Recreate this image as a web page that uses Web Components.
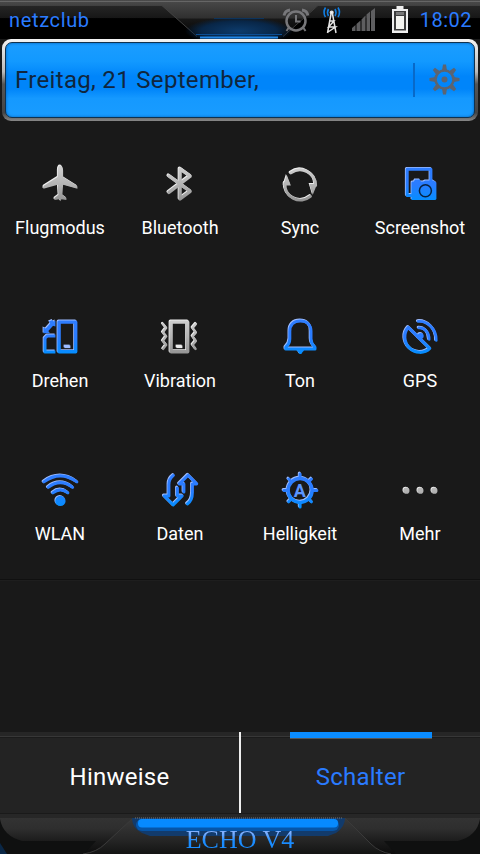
<!DOCTYPE html>
<html lang="de">
<head>
<meta charset="utf-8">
<title>Schalter</title>
<style>
  body {
    margin: 0;
    background: #191919;
    font-family: Roboto, "Noto Sans", sans-serif;
    color: #fff;
  }
</style>
</head>
<body>
<phone-shade>
  <status-bar slot="status" carrier="netzclub" time="18:02"></status-bar>
  <date-panel slot="date">Freitag, 21 September,</date-panel>
  <toggle-tile icon="plane">Flugmodus</toggle-tile>
  <toggle-tile icon="bluetooth">Bluetooth</toggle-tile>
  <toggle-tile icon="sync">Sync</toggle-tile>
  <toggle-tile icon="screenshot" on>Screenshot</toggle-tile>
  <toggle-tile icon="rotate" on>Drehen</toggle-tile>
  <toggle-tile icon="vibrate">Vibration</toggle-tile>
  <toggle-tile icon="bell" on>Ton</toggle-tile>
  <toggle-tile icon="gps" on>GPS</toggle-tile>
  <toggle-tile icon="wifi" on>WLAN</toggle-tile>
  <toggle-tile icon="data" on>Daten</toggle-tile>
  <toggle-tile icon="brightness" on>Helligkeit</toggle-tile>
  <toggle-tile icon="more">Mehr</toggle-tile>
  <shade-tab slot="tabs">Hinweise</shade-tab>
  <shade-tab slot="tabs" active>Schalter</shade-tab>
  <shade-footer slot="footer">ECHO V4</shade-footer>
</phone-shade>

<script>
// All icons use a 48x48 box. Shapes are stroked unless they carry class "f".
const icons = {
  plane: `
    <path class="f" d="M24 5c1.700 0 2.700 2 2.700 5v6.500l13.500 8.500c1 .7.900 1.300.8 3.300l-14.300-4-.7 10 4 3.200v2l-5-.6-1 2-1-2-5 .6v-2l4-3.200-.7-10-14.300 4c-.1-2-.2-2.600.8-3.300l13.500-8.500v-6.500c0-3 1-5 2.700-5z"/>`,
  bluetooth: `<path d="M12.500 15.500 33.800 31 23.700 38.500V8.500L33.800 15.800 12.500 32" stroke-width="3.300"/>`,
  sync: `
    <path d="M14.500 12.500A15.500 15.500 0 0 1 39.200 25M34 36A15.500 15.500 0 0 1 8.600 23"/>
    <path class="f" d="M10.300 14.300 14.500 25H7zM36.300 34.500 33 23.500h7.700z"/>`,
  screenshot: `
    <path d="M34.500 20V8.800H10.800V35H15"/>
    <path class="f" d="M15 22l1-1h1.500l1-2h5l1 2H27l2-1h8l3 2v16.500l-1 1H15z"/>
    <circle cx="29" cy="30.300" r="6" class="lens"/>`,
  rotate: `
    <path d="M22.700 8.700h16.600v29.600H22.700z" stroke-width="3.400"/>
    <path d="M19 22.500h-8l-2.400 2.400v13.600H19" stroke-linecap="butt"/>
    <path class="f" d="M7 14l2.300 1 4.500-5-1.300-2L16 6.500l1 1.500 2-1v6l-2.300-.7-5 5.500 2 2H7z"/>
    <path class="f w" d="M28 32h6v2.700h-6z"/>`,
  vibrate: `
    <path d="M14.700 8.700h16.600v29.600H14.700z" stroke-width="3.400"/>
    <path d="M6.500 10.500l3.300 4-3.300 4.500 3.300 4-3.300 4.500 3.300 4-3 4M39.500 10.500l-3.300 4 3.300 4.500-3.300 4 3.300 4.500-3.300 4 3 4" stroke-width="2.400"/>
    <path class="f w" d="M20 32h6v2.700h-6z"/>`,
  bell: `
    <path d="M24 7.500c-6.600 0-10.600 4-10.600 10.500v7.500c0 4-1.500 6-4 8.500v1.500h29.200V34c-2.500-2.500-4-4.500-4-8.500V18c0-6.500-4-10.500-10.600-10.500z"/>
    <path class="f" d="M20.500 36.500h7c0 1.500-1.500 1.700-2 3.300q-1.500 1.800-3 0c-.5-1.600-2-1.800-2-3.300z"/>`,
  gps: `
    <path d="M12 14C6.500 20 7.500 29 13 34.500c5.500 5.500 15 6 20.300.5z" stroke-width="3.200"/>
    <path d="M22.500 14.500C28 14 33 19 32.700 26M21.700 8C31 7 40.500 16 39.800 27" stroke-width="2.800"/>
    <circle class="f" cx="24.300" cy="22.500" r="3"/>
    <path d="M24 22l-2 2"/>`,
  wifi: `
    <path d="M7.500 15.500Q24 3.500 40.500 15.500M11.800 21Q24 11.500 36.200 21M16.500 26.500Q24 20.500 31.500 26.500"/>
    <circle class="f" cx="24" cy="34.500" r="5.200"/>`,
  data: `
    <path d="M17 9Q12.500 12.500 12.500 18v11.500H7.800l9 9 9-9H21v-8"/>
    <path d="M27.500 25.500v-8H23l8.700-8.700 8.600 8.700H36V26q0 8-5 11.500"/>`,
  brightness: `
    <circle cx="23.700" cy="24" r="12" stroke-width="3.500"/>
    <path d="M23.700 7.500v4M23.700 36.500v4M7.500 24h4M36.500 24h4M12.300 12.600l2.500 2.500M32.600 32.900l2.500 2.500M35.100 12.600l-2.500 2.500M14.800 32.900l-2.500 2.500"/>`,
  more: `
    <circle class="f" cx="10" cy="24.300" r="3.100"/>
    <circle class="f" cx="24" cy="24.300" r="3.100"/>
    <circle class="f" cx="38" cy="24.300" r="3.100"/>`,
};

class PhoneShade extends HTMLElement {
  constructor() {
    super();
    this.attachShadow({ mode: 'open' }).innerHTML = `
      <style>
        :host {
          display: flex;
          flex-direction: column;
          width: 480px;
          height: 854px;
          overflow: hidden;
          background: #191919;
        }
        .grid {
          display: grid;
          grid-template-columns: repeat(4, 120px);
          grid-auto-rows: 153px;
          border-bottom: 1px solid #101010;
          box-shadow: 0 1px #1e1e1e;
        }
        .space { flex: 1; }
        .tabs {
          display: grid;
          grid-template-columns: 241px 239px;
          height: 81px;
          background: #232323;
        }
      </style>
      <slot name="status"></slot>
      <slot name="date"></slot>
      <div class="grid"><slot></slot></div>
      <div class="space"></div>
      <div class="tabs"><slot name="tabs"></slot></div>
      <slot name="footer"></slot>
    `;
  }
}

class StatusBar extends HTMLElement {
  connectedCallback() {
    this.attachShadow({ mode: 'open' }).innerHTML = `
      <style>
        :host {
          display: grid;
          height: 39px;
          background: #000;
        }
        .frame, .row { grid-area: 1 / 1; }
        .row {
          display: flex;
          align-items: flex-start;
          padding: 0 8px 0 9px;
          font-size: 20px;
          line-height: 40px;
          color: #2a7bff;
        }
        .carrier { flex: 1; letter-spacing: .65px; }
        .time { letter-spacing: .5px; }
      </style>
      <svg class="frame" width="480" height="39">
        <defs>
          <linearGradient id="bar" x2="0" y2="1">
            <stop offset="0" stop-color="#4a4a4a"/>
            <stop offset=".45" stop-color="#303030"/>
            <stop offset=".5" stop-color="#171717"/>
            <stop offset="1" stop-color="#000"/>
          </linearGradient>
          <linearGradient id="cut" x2="0" y2="1">
            <stop offset="0" stop-color="#252525"/>
            <stop offset=".36" stop-color="#171717"/>
            <stop offset=".38" stop-color="#000"/>
          </linearGradient>
          <radialGradient id="glow">
            <stop offset="0" stop-color="#0d3b6b"/>
            <stop offset=".7" stop-color="#082647"/>
            <stop offset="1" stop-color="#082647" stop-opacity="0"/>
          </radialGradient>
        </defs>
        <rect width="480" height="39" fill="url(#bar)"/>
        <path d="M0 1.500h480" stroke="#666"/>
        <path d="M0 6h162l38 33H0zM480 6H317l-38 33h201z" fill="url(#cut)"/>
        <path d="M0 5.500h162l35 31M480 5.500H318l-35 31" fill="none" stroke="#404040"/>
        <ellipse cx="239" cy="31" rx="54" ry="14" fill="url(#glow)"/>
        <path d="M214 18.500h50" stroke="#0c335c"/>
        <path d="M196 34.500h86" stroke="#0b4f96"/>
        <path d="M200 37.500h78" stroke="#2287e6" stroke-width="2"/>
      </svg>
      <div class="row">
        <span class="carrier">${this.getAttribute('carrier')}</span>
        <svg width="139" height="39" viewBox="280 0 139 39" fill="none">
          <g stroke="#77777a" stroke-width="2.500">
            <circle cx="295" cy="21" r="9.500"/>
            <path d="M295 15v6.500h4.500M287.500 28l-2 3M302.500 28l2 3" stroke-width="2"/>
            <path d="M283 15.500q1-5 6-5.500M307 15.500q-1-5-6-5.500" stroke-width="3"/>
          </g>
          <g stroke="#e4e4e4" stroke-width="1.500">
            <path d="M330 14l-3.500 19M331.500 14l3.500 19M328.500 21h4.500l-5.500 6h7l-7.500 5"/>
            <circle cx="330.700" cy="12.500" r="1.300" fill="#fff"/>
          </g>
          <path d="M327.500 9q-2 3.500 0 7M334 9q2 3.500 0 7M324.500 7.500q-3 5 0 9.500M337 7.500q3 5 0 9.500" stroke="#127de0" stroke-width="1.600"/>
          <path d="M351 31v-3l3.500-3v6zM355.500 31v-7l4-3.500V31zM360.500 31V19.500l4-4V31zM365.500 31V14.500l3.500-3V31zM370 31V11l4-3v23z" fill="#5e5e60"/>
          <path d="M395.500 6h7v3h4.500v24h-16V9h4.500z" fill="#eee"/>
          <path d="M393 11h12v19.500h-12z" fill="#3c3c3c"/>
          <path d="M395 16h8v13h-8z" fill="#f4f4f0"/>
          <path d="M395 12h8v3h-8z" fill="#777"/>
        </svg>
        <span class="time">${this.getAttribute('time')}</span>
      </div>
    `;
  }
}

class DatePanel extends HTMLElement {
  constructor() {
    super();
    const teeth = [0, 45, 90, 135, 180, 225, 270, 315]
      .map((a) => `<path d="M-2.500-9l1-6h3l1 6z" transform="rotate(${a})"/>`)
      .join('');
    this.attachShadow({ mode: 'open' }).innerHTML = `
      <style>
        :host {
          display: block;
          box-sizing: border-box;
          height: 82px;
          margin: 0 2px -1px;
          padding: 3px;
          border-radius: 9px;
          background: linear-gradient(#f4f4f4, #bbb 40%, #555 55%, #444 90%, #888);
        }
        .inner {
          display: flex;
          align-items: center;
          height: 100%;
          box-sizing: border-box;
          padding: 0 14px 0 9px;
          border: 1px solid #10324f;
          border-radius: 7px;
          background: linear-gradient(#1b9dff, #1299ff 25%, #0085fa 45%, #0085fa 62%, #1599ff 75%, #199cff);
          box-shadow: inset 0 0 3px #0060b8;
        }
        .text {
          flex: 1;
          font-size: 24px;
          letter-spacing: .32px;
          color: #10263d;
        }
        .rule { width: 2px; height: 34px; margin-right: 14px; background: #0869c8; }
        svg { margin-bottom: 2px; }
      </style>
      <div class="inner">
        <span class="text"><slot></slot></span>
        <span class="rule"></span>
        <svg width="31" height="31" viewBox="-15.500 -15.500 31 31" fill="#5c6470">
          ${teeth}
          <circle r="9" fill="none" stroke="#5c6470" stroke-width="2.600"/>
          <circle r="3"/>
        </svg>
      </div>
    `;
  }
}

class ToggleTile extends HTMLElement {
  connectedCallback() {
    const name = this.getAttribute('icon');
    const on = this.hasAttribute('on');
    const shape = icons[name];
    const letter = name === 'brightness'
      ? '<text x="23.700" y="30.500" text-anchor="middle" font-size="18" font-weight="700" fill="#5b95ff">A</text>'
      : '';
    // the light copy sits up and left of the main one to give a bevelled edge
    this.attachShadow({ mode: 'open' }).innerHTML = `
      <style>
        :host {
          display: flex;
          flex-direction: column;
          align-items: center;
          padding-top: 40px;
          font-size: 18px;
          line-height: 24px;
          white-space: nowrap;
        }
        svg { display: block; margin-bottom: 8px; overflow: visible; }
        g { fill: none; stroke-width: 3; stroke-linecap: round; stroke-linejoin: round; }
        .hi { stroke: var(--hi); --paint: var(--hi); }
        .lo { stroke: url(#tone); --paint: url(#tone); }
        .f { fill: var(--paint); stroke: none; }
        .lo .w { fill: var(--hi); }
        .lo .lens { stroke: #082240; stroke-width: 1.500; }
        .hi .lens { stroke: none; }
        :host { --hi: #eee; }
        :host([on]) { --hi: #9dbcff; }
      </style>
      <svg width="48" height="48" viewBox="0 0 48 48">
        <linearGradient id="tone" gradientUnits="userSpaceOnUse" x1="0" y1="6" x2="0" y2="42">
          <stop offset="0" stop-color="${on ? '#2f7dff' : '#d0d0d0'}"/>
          <stop offset=".5" stop-color="${on ? '#2a7cff' : '#b4b4b4'}"/>
          <stop offset="1" stop-color="${on ? '#0090ff' : '#909090'}"/>
        </linearGradient>
        <g class="hi" transform="translate(-.4 -.4)">${shape}</g>
        <g class="lo" transform="translate(.4 .4)">${shape}</g>
        ${letter}
      </svg>
      <slot></slot>
    `;
  }
}

class ShadeTab extends HTMLElement {
  constructor() {
    super();
    this.attachShadow({ mode: 'open' }).innerHTML = `
      <style>
        :host {
          display: flex;
          flex-direction: column;
          align-items: center;
          box-sizing: border-box;
          background: linear-gradient(#262626 4px, #373737 4px 5px, #1b1b1b 5px 6px, #232323 6px);
          font-size: 24px;
          line-height: 28px;
          letter-spacing: .25px;
        }
        :host(:not([active])) { border-right: 2px solid #eee; }
        :host([active]) { color: #2a7bff; }
        .mark { width: 142px; height: 6px; margin-bottom: 25px; }
        :host([active]) .mark { background: #0a8cff; box-shadow: 0 1px #555; }
      </style>
      <div class="mark"></div>
      <slot></slot>
    `;
  }
}

class ShadeFooter extends HTMLElement {
  constructor() {
    super();
    this.attachShadow({ mode: 'open' }).innerHTML = `
      <style>
        :host { display: grid; height: 41px; }
        svg, .name { grid-area: 1 / 1; }
        .name {
          justify-self: center;
          padding-top: 13px;
          font: 26px/28px "Liberation Serif", serif;
          color: transparent;
          background: linear-gradient(#7fb0ff 20px, #1a8cff 28px);
          -webkit-background-clip: text;
          background-clip: text;
        }
      </style>
      <svg width="480" height="41">
        <defs>
          <linearGradient id="side" x2="0" y2="1">
            <stop offset="0" stop-color="#333"/>
            <stop offset=".3" stop-color="#2e2e2e"/>
            <stop offset=".65" stop-color="#1b1b1b"/>
            <stop offset="1" stop-color="#0c0c0c"/>
          </linearGradient>
          <linearGradient id="mid" x2="0" y2="1">
            <stop offset="0" stop-color="#3a3a3a"/>
            <stop offset=".6" stop-color="#262626"/>
            <stop offset="1" stop-color="#131413"/>
          </linearGradient>
        </defs>
        <rect width="480" height="41" fill="#272727"/>
        <path d="M0 .5h480" stroke="#1a1a1a"/>
        <path d="M0 5h480v36H0z" fill="url(#side)"/>
        <path d="M0 6q3 17 22 22h74L84 41H0zM480 6q-3 17-22 22h-74l12 13h84z" fill="#0f1010"/>
        <path d="M0 30l7 11H0z" fill="#0a2746"/>
        <path d="M133 5h212l28 28q5 5 12 8H83q12-2 20-9z" fill="url(#mid)"/>
        <path d="M133 5l-28 26q-8 8-22 10M345 5l26 26q8 8 20 10" fill="none" stroke="#3a3a3a"/>
        <path d="M132 5h213q0 9-9 15l-8 3H150l-8-3q-10-5-10-15z" fill="#123b6c"/>
        <rect x="136" y="6" width="203" height="12" rx="6" fill="#0655a8"/>
        <rect x="138" y="6" width="200" height="8.500" rx="4" fill="#078aff"/>
        <path d="M135 5h208" stroke="#777" stroke-dasharray="1 1"/>
      </svg>
      <span class="name"><slot></slot></span>
    `;
  }
}

customElements.define('phone-shade', PhoneShade);
customElements.define('status-bar', StatusBar);
customElements.define('date-panel', DatePanel);
customElements.define('toggle-tile', ToggleTile);
customElements.define('shade-tab', ShadeTab);
customElements.define('shade-footer', ShadeFooter);
</script>
</body>
</html>
